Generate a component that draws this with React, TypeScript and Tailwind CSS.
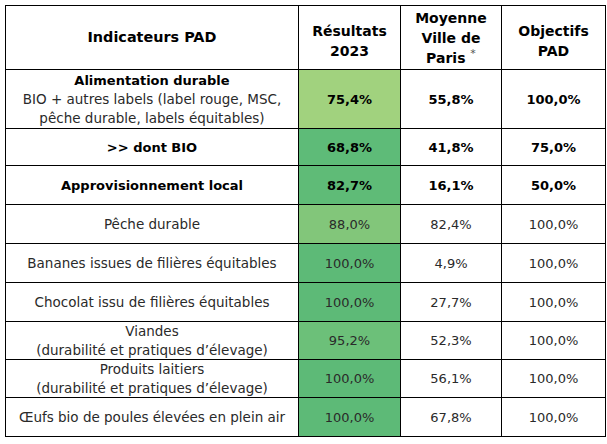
const FONT = "font-['DejaVu_Sans',sans-serif]";

type Row = {
  label: React.ReactNode;
  result: string;
  avg: string;
  goal: string;
  color: string;
  bold?: boolean;
};

const rows: Row[] = [
  {
    label: (
      <>
        <span className="text-[13px] font-bold text-black">Alimentation durable</span>
        <br />
        BIO + autres labels (label rouge, MSC,
        <br />
        pêche durable, labels équitables)
      </>
    ),
    result: "75,4%",
    avg: "55,8%",
    goal: "100,0%",
    color: "bg-[#a1d27e]",
    bold: true,
  },
  { label: <span className="text-[13px] font-bold text-black">&gt;&gt; dont BIO</span>, result: "68,8%", avg: "41,8%", goal: "75,0%", color: "bg-[#5ebb78]", bold: true },
  { label: <span className="text-[13px] font-bold text-black">Approvisionnement local</span>, result: "82,7%", avg: "16,1%", goal: "50,0%", color: "bg-[#5fbb77]", bold: true },
  { label: "Pêche durable", result: "88,0%", avg: "82,4%", goal: "100,0%", color: "bg-[#82c67a]" },
  { label: "Bananes issues de filières équitables", result: "100,0%", avg: "4,9%", goal: "100,0%", color: "bg-[#5dba77]" },
  { label: "Chocolat issu de filières équitables", result: "100,0%", avg: "27,7%", goal: "100,0%", color: "bg-[#5dba77]" },
  {
    label: (
      <>
        Viandes
        <br />
        (durabilité et pratiques d’élevage)
      </>
    ),
    result: "95,2%",
    avg: "52,3%",
    goal: "100,0%",
    color: "bg-[#6cc079]",
  },
  {
    label: (
      <>
        Produits laitiers
        <br />
        (durabilité et pratiques d’élevage)
      </>
    ),
    result: "100,0%",
    avg: "56,1%",
    goal: "100,0%",
    color: "bg-[#5dba77]",
  },
  { label: "Œufs bio de poules élevées en plein air", result: "100,0%", avg: "67,8%", goal: "100,0%", color: "bg-[#5dba77]" },
];

function Cell({ children, className = "" }: { children: React.ReactNode; className?: string }) {
  return (
    <div className={`flex items-center justify-center text-center leading-[19px] ${className}`}>
      {children}
    </div>
  );
}

export default function App() {
  return (
    <div className={`h-[444px] w-[607px] bg-white pl-[5px] pt-[5px] ${FONT}`}>
      <div className="grid w-[601px] grid-cols-[292px_101px_100px_103px] grid-rows-[63px_58px_36px_38px_38px_38px_38px_37px_37px_38px] gap-px bg-black p-px text-[13.5px] text-[#2a2a2a]">
        <Cell className="bg-white text-[14.4px] font-bold text-black">Indicateurs PAD</Cell>
        <Cell className="bg-white pt-[6px] text-[14px] font-bold leading-[20px] text-black">
          Résultats
          <br />
          2023
        </Cell>
        <Cell className="bg-white text-[14px] font-bold leading-[20px] text-black">
          <span>
            Moyenne
            <br />
            Ville de
            <br />
            Paris <sup className="text-[11px] font-normal text-[#555]">*</sup>
          </span>
        </Cell>
        <Cell className="bg-white pt-[6px] text-[14px] font-bold leading-[20px] text-black">
          Objectifs
          <br />
          PAD
        </Cell>

        {rows.map((r, i) => (
          <div key={i} className="contents">
            <Cell className="bg-white">
              <span>{r.label}</span>
            </Cell>
            <Cell className={`${r.color} ${r.bold ? "text-[13px] font-bold text-black" : "text-[13px]"}`}>{r.result}</Cell>
            <Cell className={`bg-white ${r.bold ? "text-[13px] font-bold text-black" : "text-[13px]"}`}>{r.avg}</Cell>
            <Cell className={`bg-white ${r.bold ? "text-[13px] font-bold text-black" : "text-[13px]"}`}>{r.goal}</Cell>
          </div>
        ))}
      </div>
    </div>
  );
}
